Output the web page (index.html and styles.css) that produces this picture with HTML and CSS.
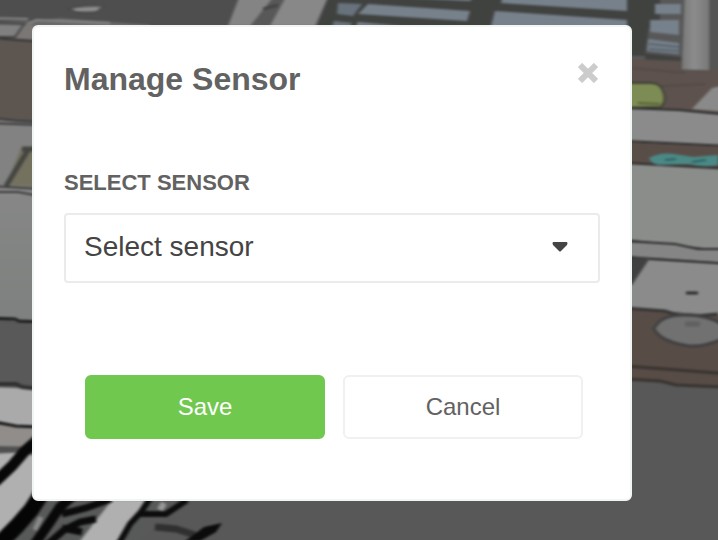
FILE: index.html
```html
<!DOCTYPE html>
<html lang="en">
<head>
<meta charset="utf-8">
<meta name="viewport" content="width=device-width, initial-scale=1">
<title>Manage Sensor</title>
<link rel="stylesheet" href="styles.css">
</head>
<body>
<svg class="scene" viewBox="0 0 718 540" preserveAspectRatio="xMinYMin slice" aria-hidden="true">
  <defs>
    <filter id="soft" x="-5%" y="-5%" width="110%" height="110%" color-interpolation-filters="sRGB"><feGaussianBlur stdDeviation="1.5 1.1"/></filter>
    <linearGradient id="post" x1="0" x2="1"><stop offset="0" stop-color="#777"/><stop offset=".45" stop-color="#8c8c8c"/><stop offset="1" stop-color="#777"/></linearGradient>
    <linearGradient id="wall" x1="0" x2="0" y1="0" y2="1"><stop offset="0" stop-color="#868786"/><stop offset="1" stop-color="#7d807e"/></linearGradient>
  </defs>
  <g filter="url(#soft)">
    <rect x="-20" y="-20" width="760" height="580" fill="#585858"/>
    <!-- roof and skylights -->
    <path d="M-10-10H250V30H-10z" fill="#4e4e4e"/>
    <path d="M68 9Q84 4 104 6L96 12Q80 14 68 9z" fill="#777" stroke="#3f3f3f"/>
    <path d="M75 10L98 9" stroke="#999" stroke-width="2"/>
    <path d="M-10 22L35 21 60 18 150 25H-10z" fill="#666"/>
    <path d="M-10 25H150V40H-10z" fill="#7a7775"/>
    <path d="M-10 18L28 19M28 24L36 20 110 23" fill="none" stroke="#888" stroke-width="2"/>
    <path d="M-10 23L24 24 15 37-10 37z" fill="#808080" stroke="#444" stroke-width="2"/>
    <path d="M-10 41H34V120H-10z" fill="#5d5550"/>
    <path d="M-10 38L34 41" stroke="#333" stroke-width="2"/>
    <path d="M240-5L228 26H250L275-5z" fill="#848484"/>
    <path d="M287-5L270 26H315L329-5z" fill="#888"/>
    <path d="M263 9L278 5" stroke="#444" stroke-width="3"/>
    <path d="M329-5L316 28H660V-5z" fill="#404240"/>
    <path d="M338 3L362 4 353 16 337 14zM334 21L352 23 348 30H331z" fill="#68727c"/>
    <path d="M363-5H475L470 1 364-4zM368 4L470 11 467 21 358 14zM358 22L402 26H356z" fill="#77818b"/>
    <path d="M503-5H627V11L501 3zM495 11L627 20V30H490z" fill="#77818b"/>
    <path d="M655 4H681V14H655zM650 20H679V35L650 32zM648 39L679 43V54L647 51z" fill="#77818b"/>
    <path d="M649 44L679 47M649 49L679 51" stroke="#59636e" stroke-width="2"/>
    <path d="M632-5H654L645 56H630zM645 53L682 57V63H645z" fill="#404240"/>
    <path d="M630 59L682 61 720 67V128L630 110z" fill="#5d524d"/>
    <path d="M632 68L685 73M645 87L705 84" stroke="#554a46" stroke-width="2"/>
    <path d="M710-5H730V70H706z" fill="#555"/>
    <path d="M684-5H710V71L681 70z" fill="url(#post)" stroke="#484848"/>
    <path d="M625 83H651Q660 83 663 91Q667 101 661 107L625 108z" fill="#7c8c54" stroke="#3f4035" stroke-width="2"/>
    <path d="M638 103L660 104" stroke="#596336" stroke-width="2"/>
    <path d="M712 88L730 84V112L692 109z" fill="#8a8a8a"/>
    <!-- right side furniture -->
    <path d="M625 108L678 110 730 115V146L625 141z" fill="#8b8b8b" stroke="#2c2c2c" stroke-width="2"/>
    <path d="M625 142L730 147V171L625 164z" fill="#594d48"/>
    <path d="M625 163L730 169V252L625 240z" fill="#8b8d8b" stroke="#2c2c2c" stroke-width="2"/>
    <path d="M649 158Q660 152 674 154L693 157 718 155V165Q703 168 689 164L660 165Q652 165 649 158z" fill="#4b8986"/>
    <path d="M665 160L676 159M692 162L706 160" stroke="#2d6262" stroke-width="2"/>
    <path d="M625 241L675 244 698 249 730 249V264L625 257z" fill="#858585" stroke="#2c2c2c" stroke-width="2"/>
    <path d="M625 257L650 259 730 264V318L625 309z" fill="#8b8b8b" stroke="#2c2c2c" stroke-width="2"/>
    <path d="M625 258H650L632 285H625z" fill="#404040"/>
    <path d="M686 293H698" stroke="#2c2c2c" stroke-width="3"/>
    <path d="M625 309L730 316V388L625 380z" fill="#574c46"/>
    <path d="M625 308L665 311 684 317 718 314" fill="none" stroke="#343434" stroke-width="3"/>
    <path d="M654 329Q660 315 684 315Q710 315 725 326V338Q705 347 689 346Q661 342 654 329z" fill="#717171" stroke="#404040" stroke-width="3"/>
    <path d="M685 324H700" stroke="#606060" stroke-width="5"/>
    <path d="M625 366L665 369 730 374M625 379L660 381 676 385 725 387" fill="none" stroke="#38332f" stroke-width="3"/>
    <!-- left side walls -->
    <path d="M-10 119L40 123V202H-10z" fill="#828282"/>
    <path d="M-10 118L18 121 40 122M-10 123L40 125" fill="none" stroke="#393939" stroke-width="2"/>
    <path d="M21 148H40V187L6 185z" fill="#74715f"/>
    <path d="M28 150L6 186M22 149H40" fill="none" stroke="#444440" stroke-width="5"/>
    <path d="M-10 187L40 190V325L-10 317z" fill="url(#wall)"/>
    <path d="M-10 186L40 189M-10 192L18 192 40 196" fill="none" stroke="#3c3c3c" stroke-width="2"/>
    <path d="M-10 318L15 319 19 321 40 322" fill="none" stroke="#1c1c1c" stroke-width="3"/>
    <path d="M-10 323L40 324V389L-10 385z" fill="#595959"/>
    <path d="M-10 387L40 389V429L20 426-10 422z" fill="#aaa"/>
    <path d="M-10 384L16 384 22 387 40 389" fill="none" stroke="#303030" stroke-width="4"/>
    <path d="M-10 424L40 428V449H-10z" fill="#918d8b"/>
    <path d="M-10 421L16 426 40 427" fill="none" stroke="#1a1a1a" stroke-width="3"/>
    <path d="M-10 449L40 450" stroke="#505050" stroke-width="6"/>
    <!-- foreground strokes -->
    <path d="M-10 454L27 452 70 480 65 550H-10z" fill="#b0b0b0"/>
    <path d="M36 500L2 550H126L181 502z" fill="#585a59"/>
    <path d="M112 500L77 545H116L146 500z" fill="#b0b0b0"/>
    <path d="M40 438L25 451 12 466-5 482" fill="none" stroke="#080808" stroke-width="11"/>
    <path d="M44 490L31 510 17 526-5 548" fill="none" stroke="#050505" stroke-width="16"/>
    <path d="M76 493L60 507 50 522 34 545" fill="none" stroke="#080808" stroke-width="10"/>
    <path d="M111 499L86 508 62 514M96 519L80 522 64 530 48 544M62 528L82 532" fill="none" stroke="#0b0b0b" stroke-width="7"/>
    <path d="M41 517L35 530" stroke="#8b8b8b" stroke-width="5"/>
    <path d="M151 497L141 512 130 524 118 545M140 514L166 514 187 500" fill="none" stroke="#0d0d0d" stroke-width="6"/>
    <path d="M164 503L160 510" stroke="#999" stroke-width="6"/>
    <path d="M155 527L176 529 195 535" fill="none" stroke="#303030" stroke-width="7"/>
    <path d="M222 523L204 527 184 542 200 541 216 532z" fill="#0b0b0b"/>
  </g>
</svg>

<main class="page">
  <form class="dialog" role="dialog" aria-labelledby="dialog-title">
    <header class="dialog-header">
      <h1 class="title" id="dialog-title">Manage Sensor</h1>
      <button class="close" type="button" aria-label="Close">
        <svg class="close-icon" viewBox="0 0 20 20" aria-hidden="true"><path d="M2 2L18 18M18 2L2 18"/></svg>
      </button>
    </header>
    <label class="label" for="sensor">SELECT SENSOR</label>
    <div class="select-wrap">
      <select class="select" id="sensor">
        <option>Select sensor</option>
      </select>
      <svg class="caret" viewBox="0 0 16 10" aria-hidden="true"><path d="M1 0H15Q16 1 15 3L9 9Q8 10 7 9L1 3Q0 1 1 0z"/></svg>
    </div>
    <div class="actions">
      <button class="button button-primary" type="submit">Save</button>
      <button class="button" type="button">Cancel</button>
    </div>
  </form>
</main>
</body>
</html>
```
FILE: styles.css
```css
* {
  box-sizing: border-box;
}

body {
  margin: 0;
  background: #585858;
  color: #626262;
  font-family: "Liberation Sans", Arial, sans-serif;
}

.scene {
  position: fixed;
  inset: 0;
  width: 100%;
  height: 100%;
}

.page {
  position: relative;
  padding: 25px 32px;
}

.dialog {
  max-width: 600px;
  padding: 30px 30px 60px;
  border: 2px solid #f1f5f4;
  border-radius: 6px;
  background: #fff;
}

.dialog-header {
  display: flex;
  justify-content: space-between;
  align-items: flex-start;
  margin-bottom: 70px;
}

.title {
  margin: 0;
  font-size: 32px;
  line-height: 44px;
}

.close {
  display: flex;
  padding: 6px 2px;
  border: 0;
  background: none;
}

.close-icon {
  width: 20px;
  height: 20px;
  fill: none;
  stroke: #ccc;
  stroke-width: 6;
}

.label {
  display: block;
  margin-bottom: 18px;
  font-size: 22px;
  font-weight: bold;
  line-height: 24px;
}

.select-wrap {
  display: grid;
  align-items: center;
  margin-bottom: 92px;
}

.select {
  grid-area: 1 / 1;
  width: 100%;
  height: 70px;
  padding: 0 60px 4px 18px;
  border: 2px solid #ebebeb;
  border-radius: 4px;
  appearance: none;
  background: #fff;
  color: #444;
  font: 28px "Liberation Sans", Arial, sans-serif;
}

.caret {
  grid-area: 1 / 1;
  justify-self: end;
  width: 16px;
  height: 10px;
  margin: 0 32px 2px 0;
  fill: #444;
  pointer-events: none;
}

.actions {
  display: flex;
  gap: 18px;
  padding: 0 17px 0 21px;
}

.button {
  flex: 1;
  height: 64px;
  border: 2px solid #f0f0f0;
  border-radius: 6px;
  background: #fff;
  color: #626262;
  font: 24px "Liberation Sans", Arial, sans-serif;
}

.button-primary {
  border-color: #71c84e;
  background: #71c84e;
  color: #fff;
}
```
